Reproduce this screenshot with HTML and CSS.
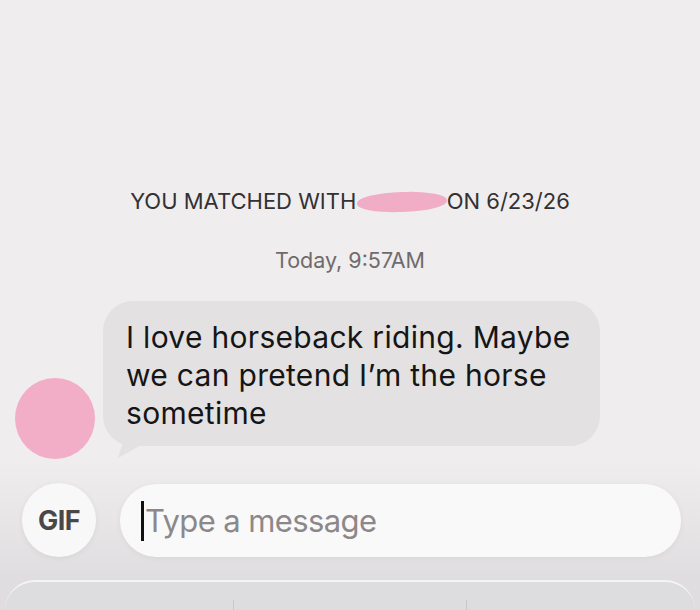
FILE: index.html
```html
<!DOCTYPE html>
<html lang="en">
<head>
<meta charset="utf-8">
<title>Chat</title>
<link rel="stylesheet" href="styles.css">
</head>
<body>
  <main class="chat">
    <p class="match-line">YOU MATCHED WITH <span class="redacted"></span> ON 6/23/26</p>
    <p class="timestamp">Today, 9:57AM</p>

    <div class="message-row">
      <div class="avatar"></div>
      <div class="bubble">I love horseback riding. Maybe we can pretend I’m the horse sometime</div>
    </div>

    <div class="composer">
      <button class="gif-btn" type="button">GIF</button>
      <div class="input-pill">
        <span class="caret"></span><span class="placeholder">Type a message</span>
      </div>
    </div>

    <div class="panel">
      <div class="panel-cell"></div>
      <div class="panel-cell"></div>
      <div class="panel-cell"></div>
    </div>
  </main>
</body>
</html>
```

FILE: styles.css
```css
* { box-sizing: border-box; }

html, body {
  margin: 0;
  height: 610px;
  overflow: hidden;
}

body {
  background: #efedee;
  font-family: "Inter", "Liberation Sans", sans-serif;
  color: #1b1a1a;
}

.chat {
  height: 610px;
  display: flex;
  flex-direction: column;
  background: linear-gradient(to bottom, #efedee 0, #efedee 460px, #e6e4e5 530px, #dfdddf 580px);
}

.match-line {
  margin: 186px 0 0;
  text-align: center;
  font-size: 22px;
  line-height: 30px;
  color: #333132;
  letter-spacing: 0;
}

.redacted {
  display: inline-block;
  width: 90px;
  height: 20px;
  margin: 0 -6px;
  vertical-align: -3px;
  background: #f1adc6;
  border-radius: 50% 45% 50% 45%;
  transform: rotate(-1.5deg);
}

.timestamp {
  margin: 29px 0 0;
  text-align: center;
  font-size: 21.5px;
  line-height: 30px;
  color: #6f6b6c;
  letter-spacing: 0;
}

.message-row {
  margin-top: 26px;
  display: flex;
  align-items: flex-end;
  gap: 8px;
  padding-left: 15px;
}

.avatar {
  width: 80px;
  height: 81px;
  border-radius: 50%;
  background: #f2adc7;
  margin-bottom: -13px;
  flex: none;
}

.bubble {
  position: relative;
  width: 497px;
  padding: 17px 18px 14px 23px;
  background: #e3e1e2;
  border-radius: 30px;
  font-size: 30px;
  line-height: 38px;
  color: #161515;
  letter-spacing: 0.3px;
}

/* little tail under the bubble, pointing at the avatar */
.bubble::after {
  content: "";
  position: absolute;
  left: 14px;
  bottom: -12px;
  width: 26px;
  height: 14px;
  background: #e3e1e2;
  clip-path: polygon(20% 0, 100% 0, 4% 100%);
}

.composer {
  margin-top: 37px;
  display: flex;
  align-items: center;
  gap: 24px;
  padding: 0 19px 0 22px;
}

.gif-btn {
  width: 74px;
  height: 74px;
  border-radius: 50%;
  border: none;
  background: #f9f8f8;
  box-shadow: 0 1px 6px rgba(0, 0, 0, 0.06);
  font-family: "Inter", "Liberation Sans", sans-serif;
  font-weight: 700;
  font-size: 27px;
  color: #4a4748;
  letter-spacing: -0.5px;
  flex: none;
  padding: 0;
}

.input-pill {
  flex: 1;
  height: 73px;
  border-radius: 37px;
  background: #faf9f9;
  box-shadow: 0 1px 6px rgba(0, 0, 0, 0.05);
  display: flex;
  align-items: center;
  padding-left: 21px;
}

.caret {
  width: 3px;
  height: 40px;
  background: #111;
  margin-top: 2px;
}

.placeholder {
  font-size: 31px;
  color: #8c888a;
  letter-spacing: -0.6px;
  margin-left: 1px;
}

.panel {
  margin: 23px 5px 0;
  flex: 1;
  display: grid;
  grid-template-columns: 228px 233px 1fr;
  background: #dddcde;
  border-top: 2px solid #f5f4f5;
  border-radius: 40px 40px 0 0;
}

.panel-cell + .panel-cell {
  border-left: 1px solid #c9c8ca;
  margin-top: 18px;
}
```
